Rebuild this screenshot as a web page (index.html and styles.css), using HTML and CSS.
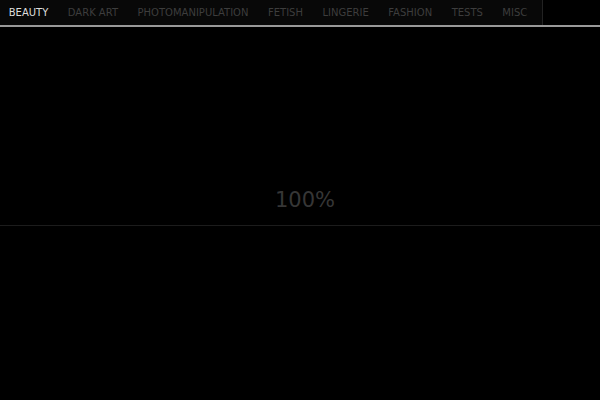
FILE: index.html
```html
<!DOCTYPE html>
<html lang="en">
<head>
    <meta charset="UTF-8">
    <title>portfolio</title>
    <link rel="stylesheet" href="styles.css">
</head>
<body>
    <div class="topbar">
        <ul class="menu">
            <li class="active">BEAUTY</li>
            <li>DARK ART</li>
            <li>PHOTOMANIPULATION</li>
            <li>FETISH</li>
            <li>LINGERIE</li>
            <li>FASHION</li>
            <li>TESTS</li>
            <li>MISC</li>
        </ul>
    </div>

    <div class="loader">
        <div class="percent">100%</div>
        <div class="progress"></div>
    </div>
</body>
</html>
```

FILE: styles.css
```css
body {
    margin: 0;
    background: #000;
    font-family: "DejaVu Sans", sans-serif;
    height: 100vh;
    overflow: hidden;
}

.topbar {
    height: 25px;
    border-bottom: 2px solid #999;
    display: flex;
}

.menu {
    list-style: none;
    margin: 0 0 0 -1px;
    padding: 0 5px 0 0;
    display: flex;
    background: #080808;
    border-right: 1px solid #222;
}

.menu li {
    font-size: 10px;
    line-height: 25px;
    color: #3d3d3d;
    padding: 0 9.75px;
}

.menu li.active {
    color: #ddd;
}

.loader {
    padding-top: 159px;
}

.percent {
    text-align: center;
    font-size: 21px;
    color: #363636;
    padding-left: 10px;
    line-height: 28px;
    margin-bottom: 11px;
}

.progress {
    height: 1px;
    background: #1c1c1c;
}
```
